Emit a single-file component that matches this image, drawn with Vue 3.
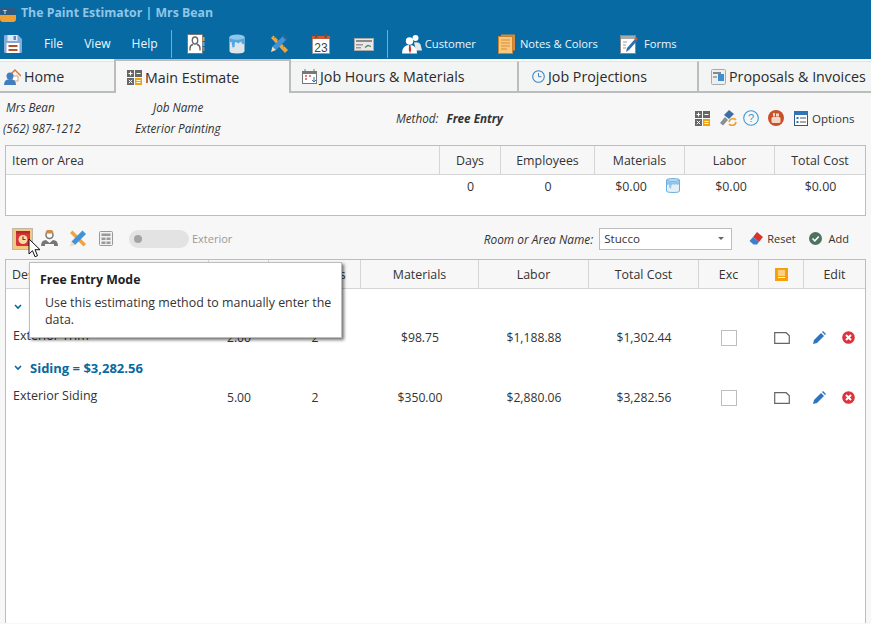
<script setup>
const topCols = [
  { t: 'Item or Area', left: true }, { t: 'Days' }, { t: 'Employees' }, { t: 'Materials' }, { t: 'Labor' }, { t: 'Total Cost' }
]
const rows = [
  { id: 1, group: null, name: 'Exterior Trim', days: '2.00', emp: '2', mat: '$98.75', lab: '$1,188.88', tot: '$1,302.44' },
  { id: 2, group: 'Siding = $3,282.56', name: 'Exterior Siding', days: '5.00', emp: '2', mat: '$350.00', lab: '$2,880.06', tot: '$3,282.56' }
]
</script>

<template>
  <div class="app">
    <header class="title">
      <svg class="logo" width="18" height="20" viewBox="0 0 18 20"><rect x="0" y="4" width="16" height="15" rx="3" fill="#2c5c86"/><path d="M0 12h16v4q0 3-3 3H3q-3 0-3-3z" fill="#f0a030"/><text x="3" y="11" font-size="6" fill="#ddd" font-family="Liberation Sans">T</text></svg>
      <span>The Paint Estimator | Mrs Bean</span>
    </header>

    <nav class="toolbar">
      <svg class="save" width="20" height="20" viewBox="0 0 20 20"><path d="M1 2q0-1 1-1h13l4 4v13q0 1-1 1H2q-1 0-1-1z" fill="#86aad8"/><rect x="4.500" y="1" width="10" height="6" fill="#dfe9f5"/><rect x="10.500" y="2" width="2.500" height="4" fill="#5d88c0"/><rect x="3.500" y="9" width="13" height="10" fill="#fff"/><rect x="5.500" y="11" width="9" height="2" fill="#b5522c"/><rect x="5.500" y="15" width="9" height="2" fill="#b5522c"/></svg>
      <span class="menu m1">File</span><span class="menu m2">View</span><span class="menu m3">Help</span>
      <i class="sep s1"></i>
      <svg class="ti ti1" width="18" height="20" viewBox="0 0 18 20"><rect x=".5" y=".5" width="15" height="19" fill="#fff" stroke="#777"/><rect x="15.500" y="3" width="2" height="4" fill="#e89a3c"/><rect x="15.500" y="8" width="2" height="4" fill="#6aa5d8"/><rect x="15.500" y="13" width="2" height="4" fill="#888"/><ellipse cx="8" cy="6.500" rx="2.700" ry="3.500" fill="none" stroke="#666" stroke-width="1.400"/><path d="M3 16.500v-2q0-3.500 3-4M13 16.500v-2q0-3.500-3-4" fill="none" stroke="#666" stroke-width="1.400"/></svg>
      <svg class="ti ti2" width="16" height="20" viewBox="0 0 16 20"><path d="M.5 3v14q0 2.500 7.500 2.500T15.500 17V3z" fill="#dce5ea"/><ellipse cx="8" cy="3" rx="7.500" ry="2.500" fill="#8fc6ea"/><path d="M.5 4q7.500 3 15 0v5l-1.500 1.500L12.500 9V7.500l-2 1-1 1-1.500-1L6 8l-.5 5-2 .5L2.500 8H.5z" fill="#54a6e0"/></svg>
      <svg class="ti ti3" width="18" height="20" viewBox="0 0 18 20"><path d="M1 4l2.500-2.500L18 16l-3 3z" fill="#f2a33a"/><path d="M5 3l-1 1M8 6L7 7M11 9l-1 1M14 12l-1 1" stroke="#a86a14"/><path d="M14 1l3.500 3.500L6 16l-3.500-3.500z" fill="#3f93d8"/><path d="M2.500 12.500L6 16l-5 2z" fill="#f0dcb8"/><path d="M14 1l3.500 3.500-1.500 1.500L12.500 2.500z" fill="#2c5e8c"/></svg>
      <svg class="ti ti4" width="18" height="20" viewBox="0 0 18 20"><rect x=".5" y="2.500" width="17" height="17" fill="#fff" stroke="#999"/><rect x="0" y="2" width="18" height="3" fill="#d0583a"/><rect x="3" y="0" width="2.500" height="4" fill="#5a5a4a"/><rect x="12.500" y="0" width="2.500" height="4" fill="#5a5a4a"/><text x="9" y="17.500" text-anchor="middle" font-size="12" fill="#444" font-family="Liberation Sans">23</text></svg>
      <svg class="ti ti5" width="20" height="13" viewBox="0 0 20 13"><rect x=".5" y=".5" width="19" height="12" fill="#e8e8e8" stroke="#aaa"/><rect x="2" y="2" width="16" height="2" fill="#8a8a8a"/><rect x="2" y="6" width="7" height="1.500" fill="#999"/><rect x="2" y="9" width="5" height="1.500" fill="#999"/><path d="M11 9.500l3-2 3 1" fill="none" stroke="#4a7d5c" stroke-width="1.200"/></svg>
      <i class="sep s2"></i>
      <svg class="ti ti6" width="20" height="20" viewBox="0 0 20 20"><circle cx="13.500" cy="4" r="3" fill="#fff"/><path d="M12 8.500q5-1 6.500 2l1.500 6h-6z" fill="#e8e8e8"/><circle cx="7.500" cy="7" r="3.700" fill="#fff"/><path d="M0 19.500q0-8.500 7.500-8.500t7.500 8.500z" fill="#fff"/><path d="M7 11h1.500l.7 5-1.200 3.500-1.200-3.500z" fill="#c9302c"/></svg>
      <span class="tt tt1">Customer</span>
      <svg class="ti ti7" width="18" height="20" viewBox="0 0 18 20"><rect x="3" y="0.500" width="14" height="16" fill="#d68b3a"/><rect x=".5" y="2.500" width="14" height="17" fill="#fbc77a" stroke="#c98234"/><path d="M3 6h9M3 9h9M3 12h9M3 15h6" stroke="#d68b3a"/></svg>
      <span class="tt tt2">Notes &amp; Colors</span>
      <svg class="ti ti8" width="18" height="19" viewBox="0 0 18 19"><rect x=".5" y=".5" width="15" height="18" fill="#fff" stroke="#888"/><rect x="1" y="1" width="14" height="3" fill="#aaa"/><path d="M3 7h4M3 10h3M3 13h3" stroke="#999"/><path d="M6 17l1-4 8-9 2 2-8 9z" fill="#2f6fb0"/><circle cx="16" cy="4" r="1.500" fill="#d9534f"/></svg>
      <span class="tt tt3">Forms</span>
    </nav>

    <div class="tabs">
      <div class="tab t1">
        <svg width="17" height="17" viewBox="0 0 17 17"><path d="M5 8l6-6 6 6" fill="none" stroke="#d9773a" stroke-width="1.500"/><path d="M8 8h6v5H8z" fill="#fff" stroke="#d9a27a"/><circle cx="6" cy="8" r="3.500" fill="#3f7fc0"/><path d="M0 17q0-6 6-6t6 6z" fill="#3f7fc0"/></svg><span>Home</span>
      </div>
      <div class="tab t2 active">
        <svg width="15" height="15" viewBox="0 0 15 15"><rect width="7" height="7" fill="#666"/><rect x="8" width="7" height="7" fill="#666"/><rect y="8" width="7" height="7" fill="#666"/><rect x="8" y="8" width="7" height="7" fill="#f0a30a"/><path d="M1.500 3.500h4M3.500 1.500v4M9.500 3.500h4M1.800 9.800l3.400 3.400M5.200 9.800l-3.400 3.400" stroke="#fff"/><path d="M9.500 10.500h4M9.500 12.500h4" stroke="#fff"/></svg><span>Main Estimate</span>
      </div>
      <div class="tab t3">
        <svg width="15" height="15" viewBox="0 0 15 15"><rect x=".5" y="2.500" width="14" height="12" fill="#fff" stroke="#777"/><rect y="2" width="15" height="3" fill="#777"/><path d="M3 0v3M12 0v3" stroke="#777"/><path d="M3 7h2M7 7h2M3 10h2" stroke="#d9534f" stroke-width="1.500"/><path d="M12 8v5M10 11l2 2 2-2" fill="none" stroke="#2f6fb0"/></svg><span>Job Hours &amp; Materials</span>
      </div>
      <div class="tab t4">
        <svg width="13" height="13" viewBox="0 0 13 13"><circle cx="6.500" cy="6.500" r="5.800" fill="none" stroke="#3f84c4" stroke-width="1.100"/><path d="M6.500 3v3.700h3" fill="none" stroke="#3f84c4"/></svg><span>Job Projections</span>
      </div>
      <div class="tab t5">
        <svg width="15" height="16" viewBox="0 0 15 16"><rect x=".5" y=".5" width="14" height="15" rx="1" fill="#eee" stroke="#aaa"/><rect x="2" y="3" width="8" height="2" fill="#888"/><rect x="2" y="7" width="4" height="2" fill="#aaa"/><rect x="7" y="5" width="6" height="7" fill="#3f8fd0"/></svg><span>Proposals &amp; Invoices</span>
      </div>
    </div>

    <main class="content">
      <section class="info">
        <div class="cust"><em class="c-name">Mrs Bean</em><em class="c-phone">(562) 987-1212</em></div>
        <div class="job"><em class="j-label">Job Name</em><em class="j-name">Exterior Painting</em></div>
        <div class="method"><em>Method:</em><b>Free Entry</b></div>
        <div class="tools">
          <svg class="g1" width="15" height="15" viewBox="0 0 15 15"><rect width="7" height="7" fill="#666"/><rect x="8" width="7" height="7" fill="#666"/><rect y="8" width="7" height="7" fill="#666"/><rect x="8" y="8" width="7" height="7" fill="#f0a30a"/><path d="M1.500 3.500h4M3.500 1.500v4M9.500 3.500h4M1.800 9.800l3.400 3.400M5.200 9.800l-3.400 3.400M9.500 10.500h4M9.500 12.500h4" stroke="#fff"/></svg>
          <svg class="g2" width="18" height="16" viewBox="0 0 18 16"><path d="M1 13l5-6 3 3-5 5.500z" fill="#8a8f96"/><path d="M5 5l5-5 5 4-5 5z" fill="#3d6ea5"/><path d="M10 12a4 4 0 017-2M17 12a4 4 0 01-7 2" fill="none" stroke="#f0a030" stroke-width="1.700"/></svg>
          <svg class="g3" width="16" height="16" viewBox="0 0 16 16"><circle cx="8" cy="8" r="7.300" fill="none" stroke="#3d9ad6" stroke-width="1.100"/><text x="8" y="12" text-anchor="middle" font-size="11" fill="#3d9ad6" font-family="Liberation Sans">?</text></svg>
          <svg class="g4" width="16" height="16" viewBox="0 0 16 16"><circle cx="8" cy="8" r="8" fill="#c8502a"/><rect x="3.500" y="7" width="9" height="6" rx="1.500" fill="#f3d8c8"/><rect x="5" y="3" width="2" height="3.500" fill="#f3d8c8"/><rect x="8" y="3.500" width="3" height="3" fill="#f3d8c8"/></svg>
          <svg class="g5" width="14" height="15" viewBox="0 0 14 15"><rect x=".5" y=".5" width="13" height="14" fill="#fff" stroke="#33587f"/><rect width="14" height="4" fill="#2f75b5"/><rect x="2.500" y="6" width="2" height="2" fill="#2f75b5"/><rect x="2.500" y="10" width="2" height="2" fill="#2f75b5"/><path d="M6 7h6M6 11h6" stroke="#555"/></svg>
          <span>Options</span>
        </div>
      </section>

      <section class="summary">
        <div class="s-head">
          <div v-for="c in topCols" :key="c.t" :class="['s-h', { left: c.left }]">{{ c.t }}</div>
        </div>
        <div class="s-body">
          <span></span><span>0</span><span>0</span>
          <span class="mat">$0.00<svg width="14" height="15" viewBox="0 0 14 15"><path d="M.5 2v11q0 1.500 6.500 1.500T13.500 13V2z" fill="#e4eff7" stroke="#6db0e0"/><ellipse cx="7" cy="2" rx="6.500" ry="1.500" fill="#bcdcf2" stroke="#6db0e0"/><path d="M1 3.500q6 1.500 12 0V6l-1.500 1L10 6 8 7 7 6 5.500 7 5 10.500 3.500 10 3 6.500 1 7z" fill="#8cc4ec"/></svg></span>
          <span class="lab">$0.00</span><span>$0.00</span>
        </div>
      </section>

      <section class="controls">
        <div class="mode">
          <span class="mode-on"><svg width="14" height="15" viewBox="0 0 14 15"><rect width="14" height="15" rx="1.500" fill="#d8323a"/><rect x="0" y="0" width="14" height="2.500" fill="#b02a30"/><circle cx="7" cy="8.500" r="4.500" fill="#fbd9a0"/><path d="M7 5.500v3h2.500" fill="none" stroke="#a02a20" stroke-width="1.200"/></svg></span>
          <svg class="mi" width="17" height="17" viewBox="0 0 17 17"><circle cx="8.500" cy="5" r="3.500" fill="#fff" stroke="#777" stroke-width="1.500"/><path d="M4.500 3.500a4 4 0 018 0z" fill="#d08a4a"/><path d="M0 16q0-6 5-6l3.500 3L12 10q5 0 5 6h-4v-2H4v2z" fill="#777"/></svg>
          <svg class="mi" width="17" height="17" viewBox="0 0 17 17"><path d="M1 3l2.500-2.500L17 14l-2.500 2.500z" fill="#f2a33a"/><path d="M13.500.5L17 4 6 15l-3.500-3.500z" fill="#3f93d8"/><path d="M2.500 11.500L6 15l-5 1.500z" fill="#f0dcb8"/></svg>
          <svg class="mi" width="14" height="15" viewBox="0 0 14 15"><rect x=".5" y=".5" width="13" height="14" rx="1" fill="#f2f2f2" stroke="#999"/><rect x="2.500" y="2.500" width="9" height="2.500" fill="#999"/><rect x="2.500" y="6.500" width="4" height="2.500" fill="#999"/><rect x="7.500" y="6.500" width="4" height="2.500" fill="#999"/><rect x="2.500" y="10.500" width="4" height="2.500" fill="#999"/><rect x="7.500" y="10.500" width="4" height="2.500" fill="#999"/></svg>
          <span class="toggle"><i></i></span>
          <span class="toggle-label">Exterior</span>
        </div>
        <div class="room">
          <em>Room or Area Name:</em>
          <div class="select"><span>Stucco</span><i></i></div>
          <svg class="r-ic" width="14" height="13" viewBox="0 0 14 13"><path d="M8 0l6 5-4 5-6-5z" fill="#d9342b"/><path d="M4 5l6 5-2 2.500H4.500L.5 9z" fill="#3f7fc8"/></svg>
          <span class="r-t">Reset</span>
          <svg class="a-ic" width="13" height="13" viewBox="0 0 13 13"><circle cx="6.500" cy="6.500" r="6.500" fill="#4d7360"/><path d="M3.500 6.500l2.300 2.300 4-4.300" fill="none" stroke="#fff" stroke-width="1.500"/></svg>
          <span class="a-t">Add</span>
        </div>
      </section>

      <section class="grid">
        <div class="g-head">
          <div class="h-desc">Description</div><div>Days</div><div>Employees</div><div>Materials</div><div>Labor</div><div>Total Cost</div><div>Exc</div>
          <div><svg width="13" height="13" viewBox="0 0 13 13"><rect width="13" height="13" fill="#f7a10a"/><path d="M3 3h7M3 5h7M3 7h7M3 9.500h7" stroke="#fff"/></svg></div>
          <div>Edit</div>
        </div>
        <div class="g-body">
          <template v-for="(r, i) in rows" :key="r.id">
            <div :class="['group', 'g' + i]">
              <svg width="8" height="6" viewBox="0 0 8 6"><path d="M1 1l3 3 3-3" fill="none" stroke="#08699f" stroke-width="1.600"/></svg>
              <b v-if="r.group">{{ r.group }}</b>
            </div>
            <div class="row">
              <div class="r-name">{{ r.name }}</div><div>{{ r.days }}</div><div>{{ r.emp }}</div><div>{{ r.mat }}</div><div>{{ r.lab }}</div><div>{{ r.tot }}</div>
              <div><i class="check"></i></div>
              <div><svg width="16" height="12" viewBox="0 0 16 12"><path d="M.7.700h11.500l3.100 3v7.600H.7z" fill="#fff" stroke="#666" stroke-width="1.200"/></svg></div>
              <div class="acts">
                <svg width="13" height="13" viewBox="0 0 13 13"><path d="M0 13l1-4 7-7 3 3-7 7z" fill="#2f74bd"/><path d="M9 1l1-1 3 3-1 1z" fill="#2f74bd"/></svg>
                <svg width="13" height="13" viewBox="0 0 13 13"><circle cx="6.500" cy="6.500" r="6.300" fill="#e0313c"/><path d="M4 4l5 5M9 4l-5 5" stroke="#fff" stroke-width="2"/></svg>
              </div>
            </div>
          </template>
        </div>
      </section>
    </main>

    <aside class="tip">
      <b>Free Entry Mode</b>
      <p>Use this estimating method to manually enter the data.</p>
    </aside>
    <svg class="cursor" width="14" height="21" viewBox="0 0 14 21"><path d="M1 1v15l3.500-3.300 2.500 6 2.500-1-2.500-6h5z" fill="#fff" stroke="#111" stroke-width="1"/></svg>
  </div>
</template>

<style>
html, body { margin: 0; padding: 0; background: #f7f7f7; }
</style>

<style scoped>
.app { position: relative; width: 871px; height: 624px; overflow: hidden; background: #f7f7f7; font-family: "Open Sans", "Noto Sans", sans-serif; font-size: 12px; color: #222; }
.title { box-sizing: border-box; height: 29px; padding-bottom: 4px; background: #086aa3; display: flex; align-items: center; color: #8fc6e8; font-weight: 700; font-size: 12.300px; }
.logo { margin: 0 3px 0 0; }
.toolbar { height: 30px; background: #086aa3; display: flex; align-items: center; color: #eef5fa; }
.save { margin-left: 3px; margin-right: 1px; }
.menu { font-size: 12.100px; margin-top: -2px; }
.m1 { margin-left: 20px; } .m2 { margin-left: 21px; } .m3 { margin-left: 21px; }
.sep { width: 1px; height: 28px; background: #7fa9c4; }
.s1 { margin-left: 13px; }
.ti1 { margin-left: 15px; } .ti2 { margin-left: 24px; } .ti3 { margin-left: 25px; } .ti4 { margin-left: 24px; } .ti5 { margin-left: 24px; }
.s2 { margin-left: 13px; }
.ti6 { margin-left: 14px; } .tt { font-size: 11.200px; white-space: nowrap; margin-top: -2px; }
.tt1 { margin-left: 3px; } .ti7 { margin-left: 22px; } .tt2 { margin-left: 4px; } .ti8 { margin-left: 22px; } .tt3 { margin-left: 6px; }
.tabs { height: 34px; background: #fff; display: flex; align-items: flex-end; box-sizing: border-box; padding-top: 2px; }
.tab { box-sizing: border-box; height: 32px; background: #f3f5f5; border-bottom: 2px solid #bcbcbc; border-right: 2px solid #bcbcbc; border-top: 1px solid #e4e4e4; display: flex; align-items: center; font-size: 14.250px; color: #2a2a2a; white-space: nowrap; }
.tab svg { margin-right: 3px; flex: none; }
.t1 { width: 114px; padding-left: 4px; border-right: 0; }
.t2 { width: 177px; padding-left: 11px; }
.t3 { width: 228px; padding-left: 11px; }
.t4 { width: 180px; padding-left: 13px; }
.t5 { width: 172px; padding-left: 12px; border-right: 0; }
.active { background: #f7f7f7; border: 2px solid #bcbcbc; border-bottom: 0; border-top-width: 2px; height: 34px; margin-top: -2px; }
.content { display: flex; flex-direction: column; padding: 0 5px; height: 530px; }
.info { height: 52px; display: flex; font-size: 11.700px; position: relative; }
.info em { display: block; font-style: italic; color: #333; }
.cust, .job { padding-top: 6px; display: flex; flex-direction: column; gap: 5px; line-height: 16px; white-space: nowrap; }
.cust { width: 132px; margin-left: -2px; }
.c-name { margin-left: 3px; }
.job { width: 261px; }
.j-label { margin-left: 18px; }
.method { display: flex; align-items: center; gap: 8px; height: 50px; width: 299px; }
.method b { font-style: italic; color: #333; }
.tools { display: flex; align-items: center; height: 50px; color: #333; flex: 1; }
.g2 { margin-left: 9px; } .g3 { margin-left: 6px; } .g4 { margin-left: 9px; } .g5 { margin-left: 10px; }
.tools span { margin-left: 4px; font-size: 11.500px; }
.summary { height: 71px; box-sizing: border-box; border: 1px solid #bdbdbd; background: #fff; }
.s-head, .s-body { display: grid; grid-template-columns: 433px 61px 94px 90px 90px 1fr; }
.s-head { box-sizing: border-box; height: 29px; background: #f7f7f7; border-bottom: 1px solid #d5d5d5; }
.s-h { border-left: 1px solid #d5d5d5; display: flex; align-items: center; justify-content: center; font-size: 12.400px; color: #333; }
.s-h.left { border-left: 0; justify-content: flex-start; padding-left: 6px; }
.s-body span { text-align: center; padding: 3px 0 0 2px; line-height: 17px; font-size: 12.400px; color: #333; position: relative; }
.s-body .mat { padding-right: 18px; }
.s-body .lab { padding-left: 4px; }
.mat svg { position: absolute; right: 4px; top: 3px; }
.controls { box-sizing: border-box; padding-top: 2px; height: 43px; display: flex; align-items: center; justify-content: space-between; }
.mode, .room { display: flex; align-items: center; }
.mode { margin-left: 7px; }
.mode-on { box-sizing: border-box; width: 21px; height: 22px; background: #f8c67c; border: 1px solid #bdb8a8; display: flex; align-items: center; justify-content: center; }
.mi:nth-child(2) { margin-left: 8px; }
.mi:nth-child(3) { margin-left: 11px; }
.mi:nth-child(4) { margin-left: 13px; }
.toggle { margin-left: 16px; width: 60px; height: 18px; border-radius: 9px; background: #e3e3e3; display: flex; align-items: center; }
.toggle i { margin-left: 5px; width: 8px; height: 8px; border-radius: 50%; background: #a4a4a4; }
.toggle-label { margin-left: 3px; font-size: 11px; color: #999; }
.room { font-size: 11px; }
.room em { color: #333; font-size: 11.900px; white-space: nowrap; }
.select { box-sizing: border-box; margin-left: 6px; width: 133px; height: 22px; background: #fff; border: 1px solid #bdbdbd; display: flex; align-items: center; justify-content: space-between; padding: 0 7px 0 4px; font-size: 11.600px; color: #333; }
.select i { border: 3.500px solid transparent; border-top-color: #666; border-bottom: 0; }
.r-ic { margin-left: 17px; }
.r-t { margin-left: 4px; color: #333; }
.a-ic { margin-left: 13px; }
.a-t { margin-left: 7px; margin-right: 17px; color: #333; }
.grid { flex: 1; box-sizing: border-box; border: 1px solid #bdbdbd; border-bottom: 0; background: #fff; min-height: 0; }
.g-head, .row { display: grid; grid-template-columns: 202px 60px 92px 118px 110px 110px 60px 45px 1fr; }
.g-head { box-sizing: border-box; height: 29px; background: #f7f7f7; border-bottom: 1px solid #d5d5d5; }
.g-head > div { border-left: 1px solid #d5d5d5; display: flex; align-items: center; justify-content: center; color: #333; font-size: 12.400px; }
.g-head > .h-desc { border-left: 0; justify-content: flex-start; padding-left: 6px; }
.group { box-sizing: border-box; display: flex; align-items: center; padding-left: 8px; gap: 8px; color: #08699f; font-size: 13px; }
.group.g0 { height: 33px; padding-top: 3px; }
.group.g1 { height: 29px; }
.row { height: 31px; align-items: center; font-size: 12.200px; color: #333; }
.row > div { display: flex; justify-content: center; align-items: center; padding-left: 2px; }
.row > .r-name { justify-content: flex-start; padding-left: 7px; margin-top: -5px; font-size: 12.500px; }
.row > .acts { gap: 16px; padding-left: 0; }
.check { box-sizing: border-box; display: block; width: 16px; height: 16px; border: 1px solid #bdbdbd; background: #fff; }
.tip { box-sizing: border-box; position: absolute; left: 29px; top: 262px; width: 313px; height: 76px; background: #fff; border: 1px solid #bdbdbd; box-shadow: 2px 2px 3px rgba(0,0,0,.55); padding: 8px 4px 8px 10px; }
.tip b { display: block; font-size: 12.300px; line-height: 17px; color: #222; }
.tip p { margin: 6px 0 0 5px; font-size: 12.400px; line-height: 17px; color: #333; }
.cursor { position: absolute; left: 28px; top: 238px; }
</style>
